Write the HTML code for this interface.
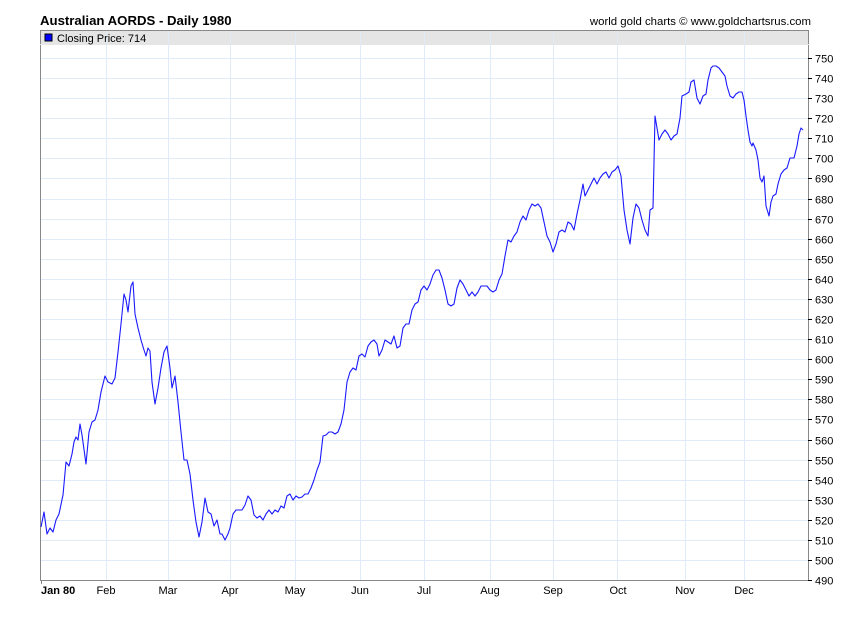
<!DOCTYPE html>
<html><head><style>
body{margin:0;background:#fff;width:850px;height:616px;overflow:hidden;font-family:"Liberation Sans",sans-serif}
</style></head><body>
<svg width="850" height="616" xmlns="http://www.w3.org/2000/svg" font-family="Liberation Sans, sans-serif">
<text x="40" y="25" font-size="13.2" font-weight="bold" fill="#000">Australian AORDS - Daily 1980</text>
<text x="811" y="25" font-size="11.4" fill="#000" text-anchor="end">world gold charts © www.goldchartsrus.com</text>
<rect x="41" y="31" width="768" height="13" fill="#e5e5e5"/>
<g stroke="#dfecf7" stroke-width="1">
<line x1="106.5" y1="31" x2="106.5" y2="580"/><line x1="168.5" y1="31" x2="168.5" y2="580"/>
<line x1="230.5" y1="31" x2="230.5" y2="580"/><line x1="295.5" y1="31" x2="295.5" y2="580"/>
<line x1="360.5" y1="31" x2="360.5" y2="580"/><line x1="424.5" y1="31" x2="424.5" y2="580"/>
<line x1="490.5" y1="31" x2="490.5" y2="580"/><line x1="553.5" y1="31" x2="553.5" y2="580"/>
<line x1="617.5" y1="31" x2="617.5" y2="580"/><line x1="685.5" y1="31" x2="685.5" y2="580"/>
<line x1="744.5" y1="31" x2="744.5" y2="580"/>
</g>
<g id="h" stroke="#dfecf7" stroke-width="1"></g>
<rect x="40.5" y="30.5" width="768" height="550" fill="none" stroke="#888" stroke-width="1"/>
<line x1="40" y1="44.5" x2="809" y2="44.5" stroke="#e5e5e5"/>
<rect x="45" y="34" width="7" height="7" fill="#00f" stroke="#000" stroke-width="1"/>
<text x="57" y="42" font-size="11" fill="#000">Closing Price: 714</text>
<g id="yl" font-size="11" fill="#000"></g>
<g font-size="11" fill="#000" text-anchor="middle">
<text x="41" y="594" font-weight="bold" text-anchor="start">Jan 80</text>
<text x="106" y="594">Feb</text><text x="168" y="594">Mar</text><text x="230" y="594">Apr</text>
<text x="295" y="594">May</text><text x="360" y="594">Jun</text><text x="424" y="594">Jul</text>
<text x="490" y="594">Aug</text><text x="553" y="594">Sep</text><text x="618" y="594">Oct</text>
<text x="685" y="594">Nov</text><text x="744" y="594">Dec</text>
</g>
<line x1="41.5" y1="580" x2="41.5" y2="584" stroke="#888"/>
<polyline fill="none" stroke="#1a1aff" stroke-width="1.1" stroke-linejoin="round" points="41,527 44,512 47,534 50,528 53,532 56,520 59,514 63,495 66,462 69,466 72,454 74,442 76,437 78,440 80,424 82,435 86,464 89,432 92,422 95,420 98,410 101,392 105,376 108,382 112,384 115,378 118,352 121,324 124,294 126,300 128,312 131,286 133,282 135,314 138,328 141,340 144,350 146,356 148,348 150,351 152,382 155,404 158,388 161,368 164,352 167,346 170,368 172,388 175,376 178,402 181,432 184,460 187,460 190,474 193,500 196,522 199,537 202,522 205,498 208,512 211,514 214,526 217,520 220,534 222,534 225,540 228,534 230,528 233,514 236,510 239,510 242,510 245,505 248,496 251,500 254,515 257,518 260,516 263,520 266,514 269,510 272,514 275,510 278,512 281,506 284,508 287,496 290,494 293,500 296,496 299,498 302,497 305,494 308,494 311,488 314,480 317,470 320,462 323,436 326,435 329,432 332,432 335,434 338,432 341,424 344,410 347,382 350,372 353,368 356,370 359,356 362,354 365,357 368,346 371,342 374,340 377,344 379,356 382,350 385,340 388,342 391,344 394,336 397,348 400,346 403,328 406,324 409,324 412,310 415,304 418,302 421,290 424,286 427,290 430,284 433,275 436,270 439,270 442,278 445,290 448,304 451,306 454,304 457,288 460,280 463,284 466,290 469,296 472,292 475,296 478,292 481,286 484,286 487,286 490,290 493,292 496,290 499,280 502,274 505,256 508,240 511,242 514,236 517,232 520,222 523,216 526,220 529,210 532,204 535,206 538,204 541,208 544,222 547,236 550,242 553,252 556,244 559,232 562,230 565,232 568,222 571,224 574,230 577,214 580,200 583,184 585,196 588,190 591,184 594,178 597,184 600,178 603,174 606,172 609,178 612,172 615,170 618,166 621,176 624,210 627,230 630,244 633,218 636,204 639,208 642,220 645,230 648,236 650,210 653,208 655,116 659,140 662,134 665,130 668,134 671,140 674,136 677,134 680,118 682,96 686,94 689,92 691,82 694,80 697,98 700,104 703,96 706,94 708,80 711,68 713,66 716,66 719,68 722,72 725,76 727,86 730,96 733,98 736,94 739,92 742,92 744,100 746,116 748,130 750,142 752,146 753,143 756,150 758,160 760,178 762,182 764,176 766,206 769,216 771,202 773,196 776,194 778,184 781,174 784,170 787,168 790,158 794,158 797,146 799,134 801,128 803,130"/>
</svg>
<script>
var h=document.getElementById('h'),yl=document.getElementById('yl'),ns='http://www.w3.org/2000/svg';
for(var v=490;v<=750;v+=10){var y=Math.round(560-(v-500)*2.008)+0.5;
if(v>490){var l=document.createElementNS(ns,'line');l.setAttribute('x1',41);l.setAttribute('x2',808);l.setAttribute('y1',y);l.setAttribute('y2',y);h.appendChild(l);}
var t=document.createElementNS(ns,'line');t.setAttribute('x1',808);t.setAttribute('x2',812);t.setAttribute('y1',y);t.setAttribute('y2',y);t.setAttribute('stroke','#000');yl.appendChild(t);
var tx=document.createElementNS(ns,'text');tx.setAttribute('x',815);tx.setAttribute('y',y+4);tx.textContent=v;yl.appendChild(tx);}
</script>
</body></html>
